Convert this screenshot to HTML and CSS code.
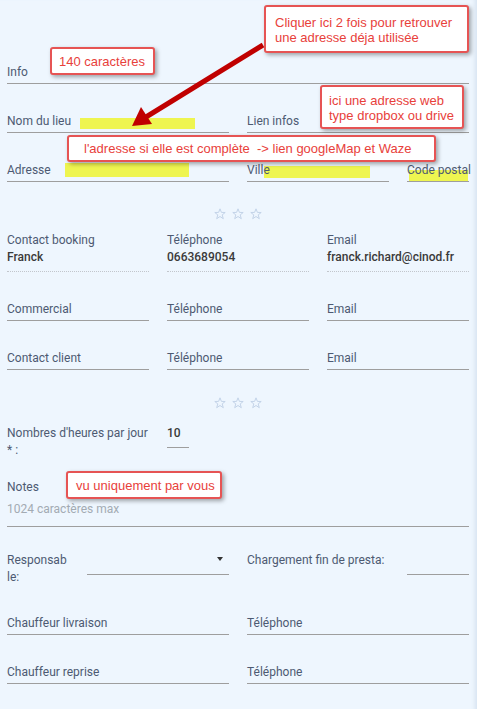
FILE: index.html
```html
<!DOCTYPE html>
<html lang="fr">
<head>
  <meta charset="UTF-8" />
  <meta name="viewport" content="width=device-width, initial-scale=1" />
  <title>Fiche lieu</title>
  <link rel="stylesheet" href="styles.css">
</head>
<body>
  <div class="page">

    <div class="field"><span class="lbl">Info</span></div>

    <div class="row two">
      <div class="field"><span class="hl hl-nom"></span><span class="lbl">Nom du lieu</span></div>
      <div class="field"><span class="lbl">Lien infos</span></div>
    </div>

    <div class="row addr">
      <div class="field"><span class="hl hl-adr"></span><span class="lbl">Adresse</span></div>
      <div class="field"><span class="hl hl-ville"></span><span class="lbl">Ville</span></div>
      <div class="field"><span class="hl hl-cp"></span><span class="lbl">Code postal</span></div>
    </div>

    <div class="stars">
      <svg viewBox="0 0 12 12"><polygon points="6,0.8 7.4,4.4 11.2,4.5 8.2,6.9 9.3,10.7 6,8.5 2.7,10.7 3.8,6.9 0.8,4.5 4.6,4.4"/></svg>
      <svg viewBox="0 0 12 12"><polygon points="6,0.8 7.4,4.4 11.2,4.5 8.2,6.9 9.3,10.7 6,8.5 2.7,10.7 3.8,6.9 0.8,4.5 4.6,4.4"/></svg>
      <svg viewBox="0 0 12 12"><polygon points="6,0.8 7.4,4.4 11.2,4.5 8.2,6.9 9.3,10.7 6,8.5 2.7,10.7 3.8,6.9 0.8,4.5 4.6,4.4"/></svg>
    </div>

    <div class="row three first">
      <div class="contact"><div class="lbl">Contact booking</div><div class="val">Franck</div></div>
      <div class="contact"><div class="lbl">Téléphone</div><div class="val">0663689054</div></div>
      <div class="contact"><div class="lbl">Email</div><div class="val">franck.richard@cinod.fr</div></div>
    </div>

    <div class="row three">
      <div class="field"><span class="lbl">Commercial</span></div>
      <div class="field"><span class="lbl">Téléphone</span></div>
      <div class="field"><span class="lbl">Email</span></div>
    </div>

    <div class="row three">
      <div class="field"><span class="lbl">Contact client</span></div>
      <div class="field"><span class="lbl">Téléphone</span></div>
      <div class="field"><span class="lbl">Email</span></div>
    </div>

    <div class="stars stars-2">
      <svg viewBox="0 0 12 12"><polygon points="6,0.8 7.4,4.4 11.2,4.5 8.2,6.9 9.3,10.7 6,8.5 2.7,10.7 3.8,6.9 0.8,4.5 4.6,4.4"/></svg>
      <svg viewBox="0 0 12 12"><polygon points="6,0.8 7.4,4.4 11.2,4.5 8.2,6.9 9.3,10.7 6,8.5 2.7,10.7 3.8,6.9 0.8,4.5 4.6,4.4"/></svg>
      <svg viewBox="0 0 12 12"><polygon points="6,0.8 7.4,4.4 11.2,4.5 8.2,6.9 9.3,10.7 6,8.5 2.7,10.7 3.8,6.9 0.8,4.5 4.6,4.4"/></svg>
    </div>

    <div class="hours">
      <div class="lbl">Nombres d'heures par jour<br>* :</div>
      <div class="hours-val">10</div>
    </div>

    <div class="field notes">
      <div class="lbl">Notes</div>
      <div class="placeholder">1024 caractères max</div>
    </div>

    <div class="row two resp">
      <div class="resp-left">
        <div class="lbl resp-lbl">Responsable:</div>
        <div class="select"><span class="caret"></span></div>
      </div>
      <div class="resp-right">
        <div class="lbl">Chargement fin de presta:</div>
        <div class="select"></div>
      </div>
    </div>

    <div class="row two">
      <div class="field"><span class="lbl">Chauffeur livraison</span></div>
      <div class="field"><span class="lbl">Téléphone</span></div>
    </div>

    <div class="row two">
      <div class="field"><span class="lbl">Chauffeur reprise</span></div>
      <div class="field"><span class="lbl">Téléphone</span></div>
    </div>

    <!-- annotations -->
    <svg class="arrow" viewBox="0 0 477 709">
      <line x1="263" y1="45" x2="146" y2="117" />
      <polygon points="132,126 141,107 152,124" />
    </svg>

    <div class="note note-140">140 caractères</div>
    <div class="note note-click">Cliquer ici 2 fois pour retrouver<br>une adresse déja utilisée</div>
    <div class="note note-web">ici une adresse web<br>type dropbox ou drive</div>
    <div class="note note-adr">l'adresse si elle est complète &nbsp;-&gt; lien googleMap et Waze</div>
    <div class="note note-vu">vu uniquement par vous</div>
  </div>
</body>
</html>
```

FILE: styles.css
```css
body {
  margin: 0;
  background: #eef6fe;
  font-family: Roboto, "Noto Sans", sans-serif;
  font-size: 12px;
  color: #4d5a72;
}
.page {
  position: relative;
  padding: 62px 8px 30px 7px;
  min-height: 709px;
  box-sizing: border-box;
  box-shadow: inset -5px 0 4px -3px #d6e3f0;
}
.field {
  position: relative;
  line-height: 17px;
  padding: 2px 0;
  border-bottom: 1px solid #9e9e9e;
  white-space: nowrap;
}
.lbl {
  position: relative;
  line-height: 17px;
}
.row {
  display: grid;
  gap: 18px;
  margin-top: 27px;
}
.two {
  grid-template-columns: 1fr 1fr;
}
.three {
  grid-template-columns: 1fr 1fr 1fr;
}
.addr {
  grid-template-columns: 1fr 142px 62px;
}

/* yellow marker */
.hl {
  position: absolute;
  background: #eef550;
}
.hl-nom { left: 73px; top: 7px; width: 115px; height: 11px; }
.hl-adr { left: 58px; top: 3px; width: 124px; height: 14px; }
.hl-ville { left: 17px; top: 6px; width: 106px; height: 12px; }
.hl-cp { left: 2px; top: 10px; width: 59px; height: 11px; }

.stars {
  display: flex;
  justify-content: center;
  align-items: center;
  gap: 6px;
  height: 16px;
  margin-top: 24px;
}
.stars svg {
  width: 12px;
  height: 12px;
  fill: none;
  stroke: #c3d3e8;
  stroke-width: 1;
}
.stars-2 {
  margin-top: 25px;
}
.first {
  margin-top: 9px;
}
.contact {
  padding-bottom: 5px;
  border-bottom: 1px dotted #c2c6cc;
}
.contact .lbl {
  line-height: 18px;
}
.val {
  color: #3a3a3a;
  font-weight: 500;
  line-height: 17px;
  white-space: nowrap;
}

.hours {
  display: grid;
  grid-template-columns: 150px 22px;
  gap: 10px;
  margin-top: 14px;
}
.hours-val {
  color: #3a3a3a;
  font-weight: 500;
  line-height: 17px;
  padding-bottom: 5px;
  border-bottom: 1px solid #9e9e9e;
  align-self: start;
}

.notes {
  margin-top: 20px;
  padding: 0 0 8px;
}
.placeholder {
  margin-top: 5px;
  color: #a3abb3;
}

.resp {
  margin-top: 25px;
}
.resp-left {
  display: grid;
  grid-template-columns: 62px 1fr;
  gap: 18px;
  align-items: start;
}
.resp-lbl {
  word-break: break-all;
}
.resp-right {
  display: grid;
  grid-template-columns: 142px 62px;
  gap: 18px;
  align-items: start;
  white-space: nowrap;
}
.select {
  position: relative;
  height: 17px;
  padding-bottom: 5px;
  border-bottom: 1px solid #9e9e9e;
}
.caret {
  position: absolute;
  right: 6px;
  top: 5px;
  border-left: 3px solid transparent;
  border-right: 3px solid transparent;
  border-top: 4px solid #333;
}

/* annotations */
.arrow {
  position: absolute;
  left: 0;
  top: 0;
  width: 477px;
  height: 709px;
  pointer-events: none;
}
.arrow line {
  stroke: #c00000;
  stroke-width: 5;
}
.arrow polygon {
  fill: #c00000;
}
.note {
  position: absolute;
  box-sizing: border-box;
  background: #fff;
  border: 2px solid #e65454;
  border-radius: 3px;
  box-shadow: 2px 2px 4px rgba(0, 0, 0, 0.35);
  color: #e8413b;
  font-family: "Liberation Sans", Arial, sans-serif;
  font-size: 13px;
  line-height: 15px;
  white-space: nowrap;
}
.note-140 { left: 50px; top: 47px; width: 105px; height: 28px; padding: 5px 0 0 7px; }
.note-click { left: 264px; top: 5px; width: 205px; height: 48px; padding: 8px 0 0 9px; }
.note-web { left: 320px; top: 85px; width: 144px; height: 44px; padding: 6px 0 0 7px; }
.note-adr { left: 67px; top: 135px; width: 369px; height: 27px; padding: 4px 0 0 15px; }
.note-vu { left: 66px; top: 471px; width: 156px; height: 28px; padding: 5px 0 0 8px; }
```
